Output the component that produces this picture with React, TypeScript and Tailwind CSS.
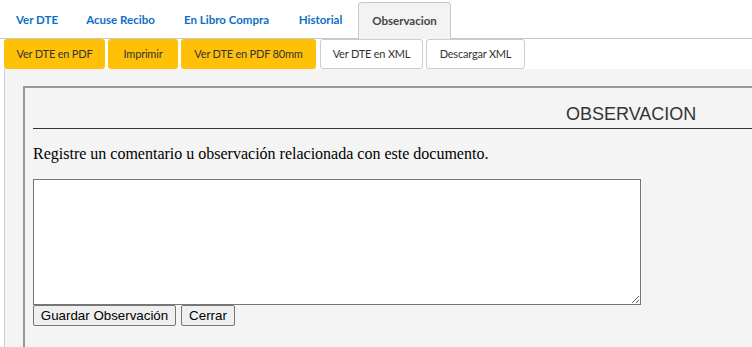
import React from "react";

const tabs = [
  { label: "Ver DTE", w: "w-[70px]" },
  { label: "Acuse Recibo", w: "w-[97px]" },
  { label: "En Libro Compra", w: "w-[115px]" },
  { label: "Historial", w: "w-[73px]" },
];

export default function App() {
  return (
    <div className="w-[752px] h-[347px] bg-white overflow-hidden relative" style={{ fontFamily: "'Source Sans Pro', Lato, 'Noto Sans', sans-serif" }}>
      {/* Tabs */}
      <div className="flex h-[39px] border-b border-[#c3c8d2] pl-[2px] items-end">
        {tabs.map((t) => (
          <div key={t.label} className={`${t.w} h-[37px] flex items-center justify-center text-[11.5px] font-bold text-[#0e6fc6]`}>
            {t.label}
          </div>
        ))}
        <div className="w-[93px] h-[37px] -mb-px flex items-center justify-center text-[11.5px] font-bold text-[#454545] bg-[#f3f3f3] border border-b-0 border-[#c3c8d2] rounded-t-[4px] ml-[1px]">
          Observacion
        </div>
      </div>
      {/* Action buttons */}
      <div className="flex h-[30px] pl-[4px] gap-[3px] text-[11px] tracking-[-0.2px] text-[#333]">
        <div className="w-[101px] flex items-center justify-center bg-[#ffc107] rounded-[3px]">Ver DTE en PDF</div>
        <div className="w-[70px] flex items-center justify-center bg-[#ffc107] rounded-[3px]">Imprimir</div>
        <div className="w-[135px] flex items-center justify-center bg-[#ffc107] rounded-[3px]">Ver DTE en PDF 80mm</div>
        <div className="w-[103px] flex items-center justify-center bg-white border border-[#cccccc] rounded-[3px] ml-[1px]">Ver DTE en XML</div>
        <div className="w-[99px] flex items-center justify-center bg-white border border-[#cccccc] rounded-[3px]">Descargar XML</div>
      </div>
      {/* Content area */}
      <div className="ml-[4px] h-[278px] bg-[#f4f4f4] border-l border-[#c8cdd8] pl-[18px] pt-[17px]">
        <div className="w-[800px] h-[300px] border-2 border-[#999999] pl-[8px] pr-0">
          <div className="h-[40px] flex items-end justify-start pl-[533px] pb-0 text-[18px] text-[#333]" style={{ fontFamily: "'Liberation Sans', Arial, sans-serif" }}>
            OBSERVACION
          </div>
          <div className="border-t border-[#333333]" />
          <p className="mt-[16px] text-[16px] text-black leading-[18px]" style={{ fontFamily: "'Liberation Serif', 'Times New Roman', serif" }}>
            Registre un comentario u observación relacionada con este documento.
          </p>
          <textarea className="block mt-[16px] w-[608px] h-[126px] bg-white border border-[#767676] resize-y" />
          <div className="flex gap-[5px]" style={{ fontFamily: "'Liberation Sans', Arial, sans-serif" }}>
            <button className="h-[21px] w-[143px] bg-[#efefef] border border-[#767676] rounded-[2px] text-[13.33px] text-black">Guardar Observación</button>
            <button className="h-[21px] w-[54px] bg-[#efefef] border border-[#767676] rounded-[2px] text-[13.33px] text-black">Cerrar</button>
          </div>
        </div>
      </div>
    </div>
  );
}
